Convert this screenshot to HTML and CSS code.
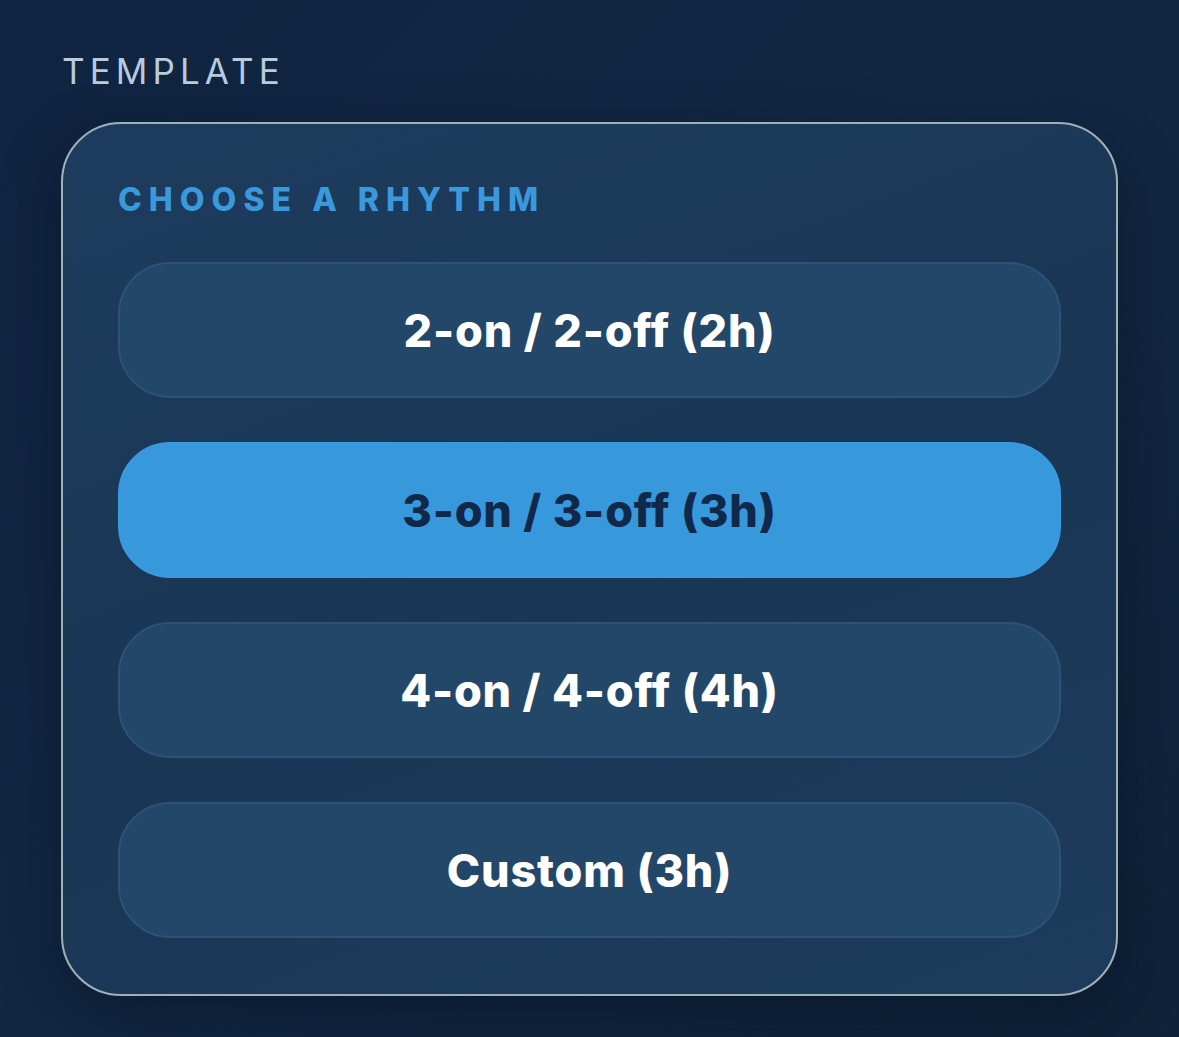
FILE: index.html
```html
<!DOCTYPE html>
<html lang="en">
<head>
    <meta charset="UTF-8">
    <meta name="viewport" content="width=device-width, initial-scale=1.0">
    <title>Template</title>
    <link rel="stylesheet" href="styles.css">
</head>
<body>
    <div class="page">
        <div class="section-label">TEMPLATE</div>

        <div class="card">
            <div class="card-title">CHOOSE A RHYTHM</div>

            <div class="options">
                <button class="option">2-on / 2-off (2h)</button>
                <button class="option active">3-on / 3-off (3h)</button>
                <button class="option">4-on / 4-off (4h)</button>
                <button class="option">Custom (3h)</button>
            </div>
        </div>
    </div>
</body>
</html>
```

FILE: styles.css
```css
* {
    box-sizing: border-box;
    font-family: Inter, 'Noto Sans', sans-serif;
}

html, body {
    margin: 0;
    height: 100%;
}

body {
    background: linear-gradient(135deg, #0f2440 0%, #112843 50%, #0f2239 100%);
}

.page {
    padding: 48px 61px 0 61px;
}

.section-label {
    color: #b9cade;
    font-size: 35px;
    line-height: 46px;
    letter-spacing: 0.145em;
    font-weight: 400;
    padding-left: 1px;
    margin-bottom: 28px;
}

.card {
    width: 1057px;
    border: 2px solid #a0b0b8;
    border-radius: 60px;
    background: linear-gradient(160deg, #1d3c5d 0%, #1a3655 50%, #1d3b5b 100%);
    box-shadow: 0 20px 60px rgba(4, 14, 28, 0.45);
    padding: 54px 55px 56px 55px;
}

.card-title {
    color: #3a98dc;
    font-size: 32px;
    line-height: 44px;
    font-weight: 800;
    letter-spacing: 0.22em;
    margin-bottom: 40px;
}

.options {
    display: flex;
    flex-direction: column;
    gap: 44px;
}

.option {
    height: 136px;
    width: 100%;
    border: 2px solid #2d5276;
    border-radius: 52px;
    background: #234768;
    color: #ffffff;
    font-size: 45px;
    font-weight: 800;
    letter-spacing: 0.8px;
    cursor: pointer;
}

.option.active {
    background: #3898dc;
    border-color: #3a9ae0;
    color: #10294a;
}
```
